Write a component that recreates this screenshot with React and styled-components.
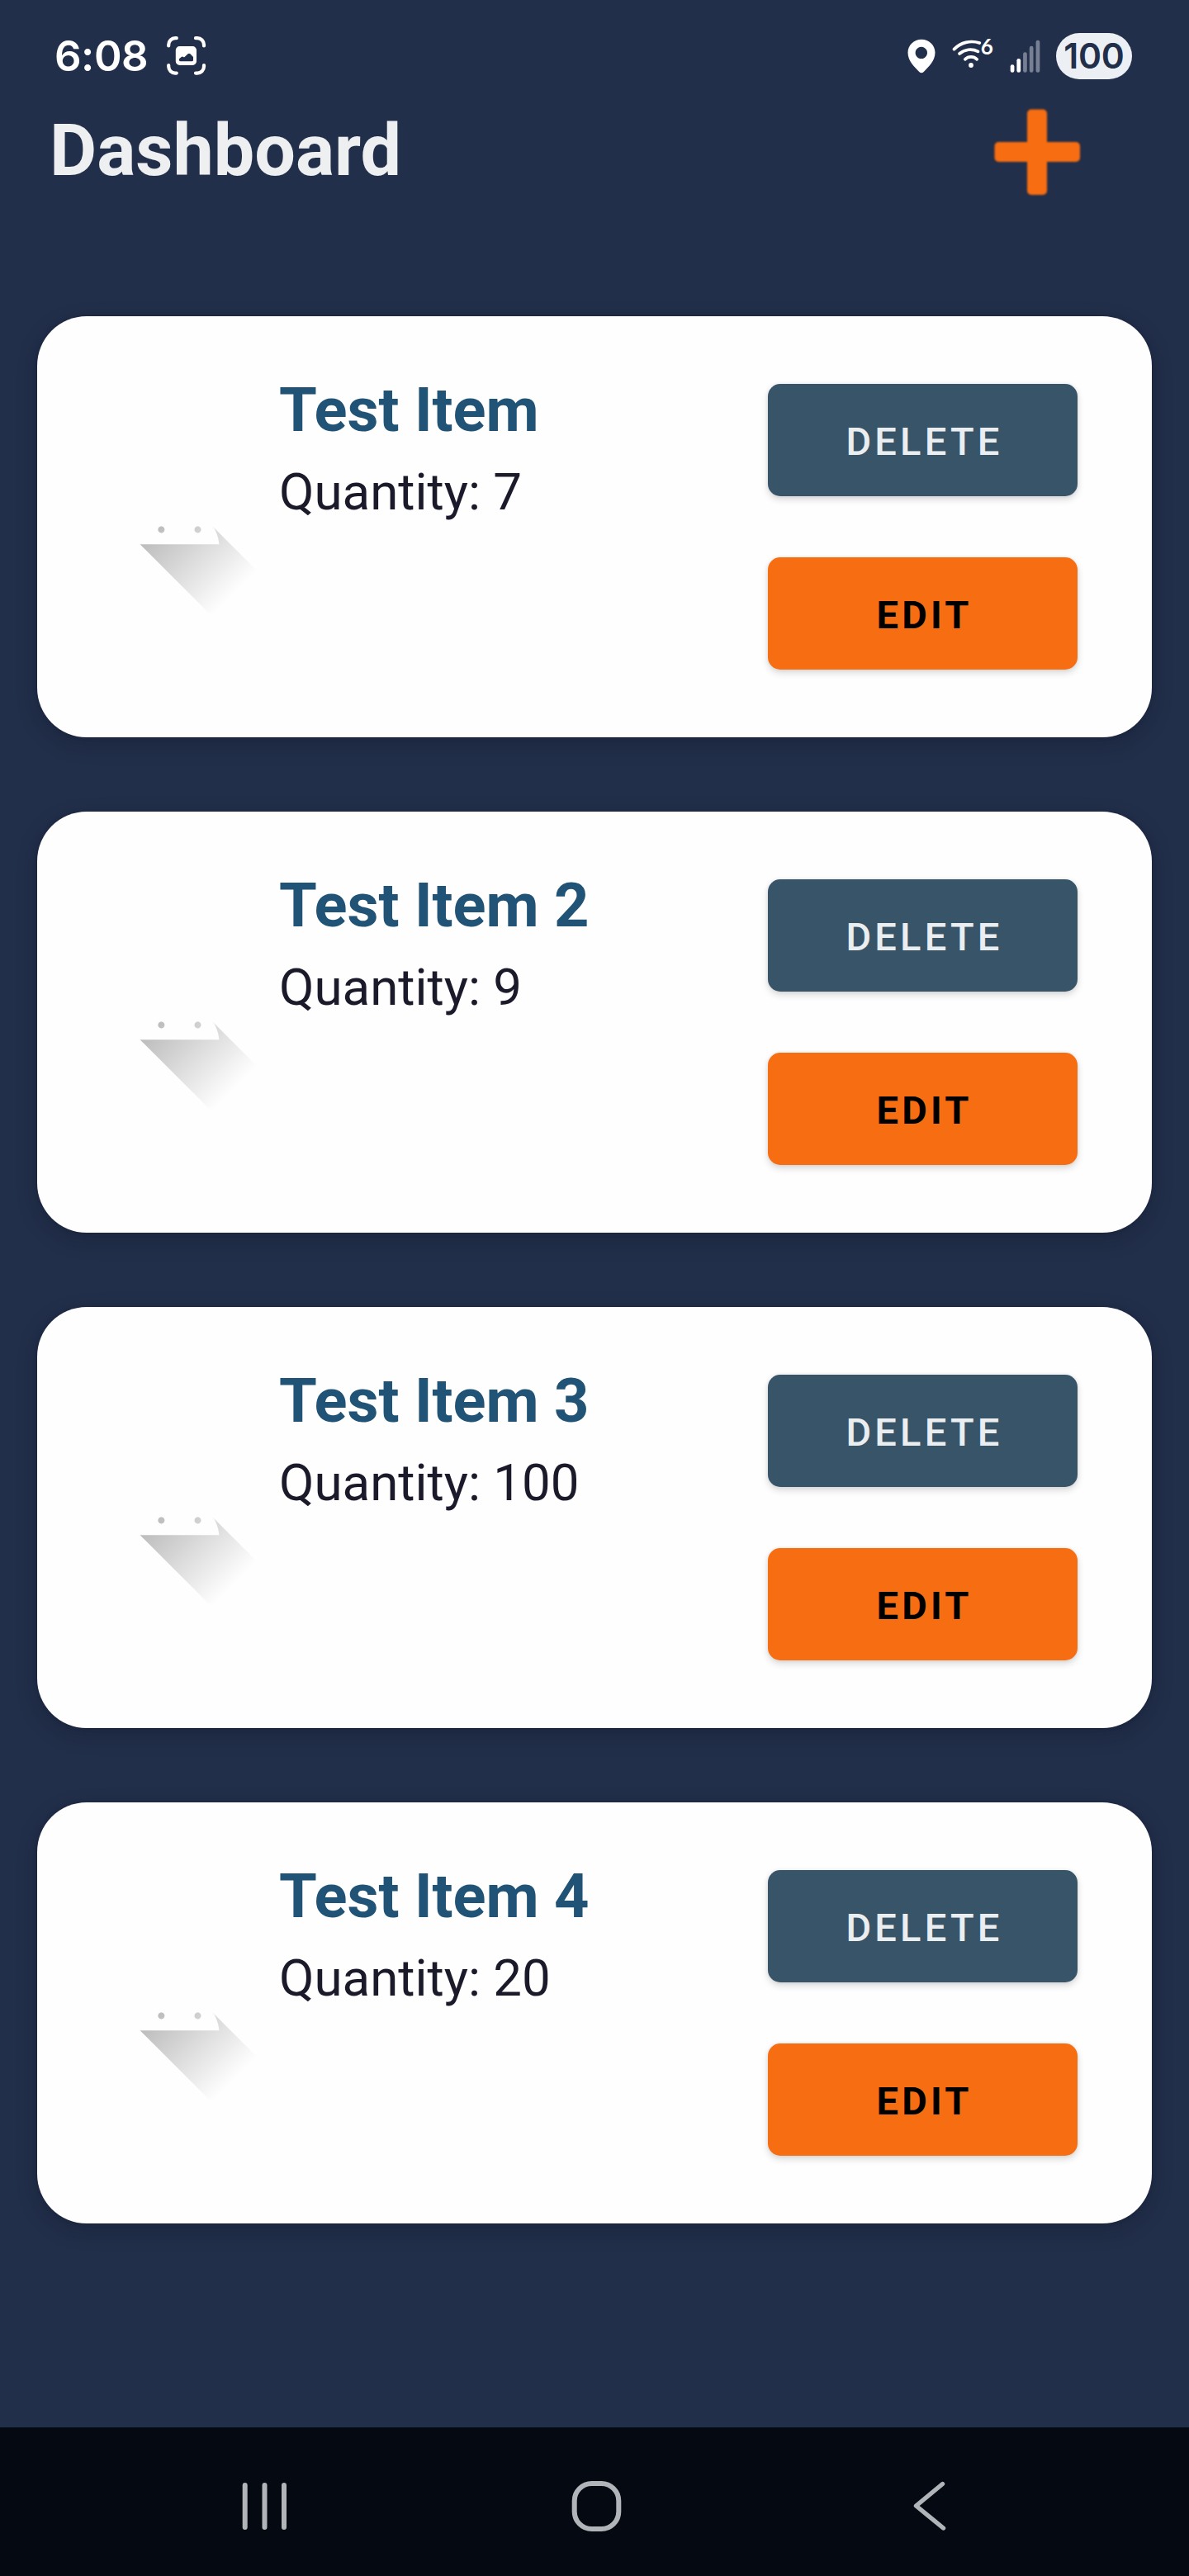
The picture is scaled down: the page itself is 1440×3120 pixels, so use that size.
import React from "react";
import styled, { createGlobalStyle } from "styled-components";

const GlobalStyle = createGlobalStyle`
  *, *::before, *::after { box-sizing: border-box; }
  body { margin: 0; background: #222f4a; font-family: Roboto, sans-serif; }
  svg { display: block; flex: none; }
`;

const Screen = styled.div`
  display: flex;
  flex-direction: column;
  width: 1440px;
  height: 3120px;
  background: #222f4a;
`;

const StatusBar = styled.header`
  display: flex;
  align-items: flex-start;
  justify-content: space-between;
  height: 130px;
  padding: 40px 69px 0 66px;
  font-family: Inter, sans-serif;
  color: #fff;
`;

const StatusGroup = styled.div`
  display: flex;
  align-items: center;
  height: 56px;
`;

const Clock = styled.time`
  width: 134px;
  font-size: 51px;
  font-weight: 600;
  line-height: 56px;
  letter-spacing: -0.5px;
`;

const Battery = styled.div`
  width: 92px;
  height: 56px;
  border-radius: 28px;
  background: #eceff3;
  color: #222f4a;
  font-size: 42.5px;
  font-weight: 600;
  line-height: 56px;
  letter-spacing: -0.2px;
  text-align: center;
`;

const TitleBar = styled.div`
  display: flex;
  align-items: flex-start;
  justify-content: space-between;
  height: 253px;
  padding: 0 129px 0 60px;
`;

const Title = styled.h1`
  margin: 0;
  font-size: 88px;
  font-weight: 700;
  line-height: 104px;
  color: #eeeff0;
`;

const AddButton = styled.button`
  width: 110px;
  height: 110px;
  margin: 0;
  padding: 0;
  border: 0;
  background: none;
`;

const List = styled.main`
  display: flex;
  flex: 1;
  flex-direction: column;
  gap: 90px;
  padding: 0 45px;
`;

const Card = styled.article`
  display: flex;
  align-items: flex-start;
  height: 510px;
  padding: 0 90px 0 60px;
  border-radius: 60px;
  background: #fefefe;
  box-shadow: 0 8px 24px rgba(12, 16, 32, 0.28), 0 0 5px rgba(12, 16, 32, 0.14);
`;

const Thumbnail = styled.div`
  align-self: center;
  width: 225px;
  height: 225px;
`;

const Details = styled.div`
  flex: 1;
  padding: 70px 0 0 8px;
`;

const ItemName = styled.h2`
  margin: 0 0 20px;
  font-size: 74px;
  font-weight: 700;
  line-height: 87px;
  color: #205375;
`;

const Quantity = styled.p`
  margin: 0;
  font-size: 61.8px;
  line-height: 72px;
  color: #1b1a2b;
`;

const Actions = styled.div`
  display: flex;
  flex-direction: column;
  gap: 74px;
  padding-top: 82px;
`;

const ActionButton = styled.button`
  width: 375px;
  height: 136px;
  margin: 0;
  padding: 3px 0 0 4px;
  border: 0;
  border-radius: 15px;
  background: ${(p) => (p.$primary ? "#f76d11" : "#375469")};
  color: ${(p) => (p.$primary ? "#000" : "#ebeef1")};
  font-family: Roboto, sans-serif;
  font-size: 47px;
  font-weight: ${(p) => (p.$primary ? 700 : 500)};
  line-height: 133px;
  letter-spacing: 4.2px;
  box-shadow: 0 4px 9px rgba(0, 0, 0, 0.15), 0 0 4px rgba(0, 0, 0, 0.07);
`;

const NavBar = styled.nav`
  display: flex;
  align-items: flex-start;
  gap: 330px;
  height: 180px;
  padding: 60px 0 0 284px;
  background: #050911;
`;

const CaptureIcon = () => (
  <svg width="52" height="52" viewBox="200 43 52 52">
    <g fill="none" stroke="#fff" strokeWidth="4.2" strokeLinecap="round">
      <path d="M204.2 56.5v-1.3a8 8 0 0 1 8-8h1.6" />
      <path d="M237 47.2h2a8 8 0 0 1 8 8v1.3" />
      <path d="M204.2 80v1.6a8 8 0 0 0 8 8h1.6" />
      <path d="M237 89.6h2a8 8 0 0 0 8-8V80" />
    </g>
    <path
      fill="#fff"
      fillRule="evenodd"
      d="M217.5 57h15.8a4.7 4.7 0 0 1 4.7 4.7v13.5a4.7 4.7 0 0 1-4.7 4.7h-15.8a4.7 4.7 0 0 1-4.7-4.7V61.700a4.7 4.7 0 0 1 4.700-4.700zM217 72.200v1.500a1.600 1.600 0 0 0 1.600 1.600h13.800a1.600 1.600 0 0 0 1.600-1.600v-3.700l-3.600-3.800q-1.400-1-2.800 0l-4 3.800q-.7.500-1.400 0q-1.300-1.100-2.500-.1z"
    />
  </svg>
);

const PinIcon = () => (
  <svg width="34" height="56" viewBox="1098.500 40 34 56">
    <path
      fill="#fff"
      fillRule="evenodd"
      d="M1115.500 47.700c9.300 0 16.500 7 16.500 16c0 10.500-8.500 17.500-14 23.500q-2.500 2.200-5 0c-5.500-6-14-13-14-23.500c0-9 7.200-16 16.500-16zM1115.300 56.700a7.200 7.200 0 1 0 .01 0z"
    />
  </svg>
);

const WifiIcon = () => (
  <svg width="50" height="56" viewBox="1153 40 50 56">
    <g fill="none" stroke="#fff" strokeWidth="3.700" strokeLinecap="round">
      <path d="M1155.500 59.600A30 30 0 0 1 1186.300 52" />
      <path d="M1162 65A20.500 20.500 0 0 1 1184.500 62.300" />
      <path d="M1168.800 71.800A10.500 10.500 0 0 1 1183.200 71.800" />
    </g>
    <circle cx="1176" cy="79" r="2.900" fill="#fff" />
    <text x="1187.700" y="66.400" fill="#fff" fontFamily="Lato, sans-serif" fontSize="26" fontWeight="700">6</text>
  </svg>
);

const BARS = [
  { x: 1223.7, top: 78.3, on: true },
  { x: 1231.4, top: 71, on: true },
  { x: 1239.1, top: 63.3, on: false },
  { x: 1246.8, top: 55.7, on: false },
  { x: 1254.6, top: 48.7, on: false },
];

const SignalIcon = () => (
  <svg width="38" height="56" viewBox="1222 40 38 56">
    {BARS.map((b) => (
      <rect key={b.x} x={b.x} y={b.top} width="4.700" height={87.7 - b.top} rx="2.200" fill={b.on ? "#fff" : "#778093"} />
    ))}
  </svg>
);

const StatusIcons = styled.div`
  display: flex;
  align-items: center;
  margin-right: 19px;
`;

const WifiSlot = styled.div`
  margin: 0 19px 0 20.5px;
`;

const PlusShape = styled.g`
  fill: #f76d11;
  filter: blur(0.9px);
`;

const PlusIcon = () => (
  <svg width="110" height="110" viewBox="0 0 110 110">
    <PlusShape>
      <rect x="43" y="2.500" width="24" height="103.500" rx="5" />
      <rect x="3.500" y="42" width="103.500" height="24" rx="5" />
    </PlusShape>
  </svg>
);

const RobotPlaceholder = ({ id }) => (
  <svg width="225" height="225" viewBox="0 0 108 108">
    <defs>
      <linearGradient id={id} gradientUnits="userSpaceOnUse" x1="42.949" y1="49.597" x2="85.840" y2="92.496">
        <stop offset="0" stopColor="#000" stopOpacity="0.267" />
        <stop offset="1" stopColor="#000" stopOpacity="0" />
      </linearGradient>
    </defs>
    <path
      fill={`url(#${id})`}
      d="M31,63.928c0,0 6.4,-11 12.1,-13.1c7.2,-2.6 26,-1.4 26,-1.4l38.1,38.1L107,108.928l-32,-1L31,63.928z"
    />
    <path
      fill="#fefefe"
      fillRule="evenodd"
      d="M65.3,45.828l3.8,-6.6c0.2,-0.4 0.1,-0.9 -0.3,-1.1c-0.4,-0.2 -0.9,-0.1 -1.1,0.3l-3.9,6.7c-6.3,-2.8 -13.4,-2.8 -19.7,0l-3.9,-6.7c-0.2,-0.4 -0.7,-0.5 -1.1,-0.3C38.8,38.328 38.7,38.828 38.9,39.228l3.8,6.6C36.2,49.428 31.7,56.028 31,63.928h46C76.3,56.028 71.8,49.428 65.3,45.828zM43.4,57.328c-0.8,0 -1.5,-0.5 -1.8,-1.2c-0.3,-0.7 -0.1,-1.5 0.4,-2.1c0.5,-0.5 1.4,-0.7 2.1,-0.4c0.7,0.3 1.2,1 1.2,1.8C45.3,56.528 44.5,57.328 43.4,57.328L43.4,57.328zM64.6,57.328c-0.8,0 -1.5,-0.5 -1.8,-1.2s-0.1,-1.5 0.4,-2.1c0.5,-0.5 1.4,-0.7 2.1,-0.4c0.7,0.3 1.2,1 1.2,1.8C66.5,56.528 65.6,57.328 64.6,57.328L64.6,57.328z"
    />
  </svg>
);

const NavIcon = ({ children }) => (
  <svg width="72" height="72" viewBox="0 0 72 72" fill="none" stroke="#b1b4b9" strokeWidth="6" strokeLinecap="round" strokeLinejoin="round">
    {children}
  </svg>
);

const ITEMS = [
  { name: "Test Item", quantity: 7 },
  { name: "Test Item 2", quantity: 9 },
  { name: "Test Item 3", quantity: 100 },
  { name: "Test Item 4", quantity: 20 },
];

export default function App() {
  return (
    <>
      <GlobalStyle />
      <Screen>
        <StatusBar>
          <StatusGroup>
            <Clock>6:08</Clock>
            <CaptureIcon />
          </StatusGroup>
          <StatusGroup>
            <StatusIcons>
              <PinIcon />
              <WifiSlot>
                <WifiIcon />
              </WifiSlot>
              <SignalIcon />
            </StatusIcons>
            <Battery>100</Battery>
          </StatusGroup>
        </StatusBar>
        <TitleBar>
          <Title>Dashboard</Title>
          <AddButton aria-label="Add item">
            <PlusIcon />
          </AddButton>
        </TitleBar>
        <List>
          {ITEMS.map((item, i) => (
            <Card key={item.name}>
              <Thumbnail>
                <RobotPlaceholder id={`shade-${i}`} />
              </Thumbnail>
              <Details>
                <ItemName>{item.name}</ItemName>
                <Quantity>Quantity: {item.quantity}</Quantity>
              </Details>
              <Actions>
                <ActionButton>DELETE</ActionButton>
                <ActionButton $primary>EDIT</ActionButton>
              </Actions>
            </Card>
          ))}
        </List>
        <NavBar>
          <NavIcon>
            <path d="M12.700 10v51M36.500 10v51M60 10v51" />
          </NavIcon>
          <NavIcon>
            <rect x="9.700" y="8" width="53.600" height="55" rx="21" />
          </NavIcon>
          <NavIcon>
            <path d="M53.500 8.500L21.500 35L54.500 62" strokeWidth="5.400" />
          </NavIcon>
        </NavBar>
      </Screen>
    </>
  );
}
